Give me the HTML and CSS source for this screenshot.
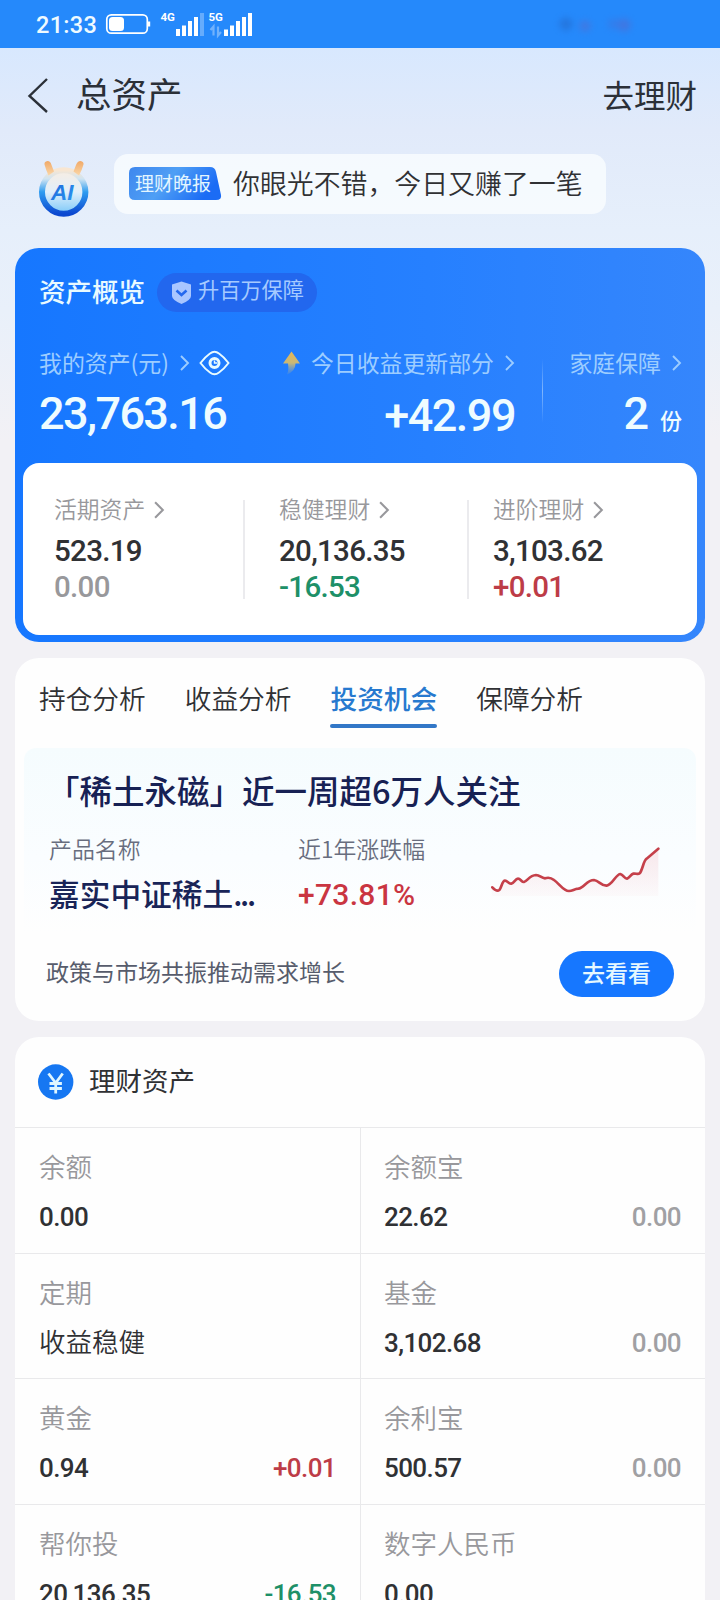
FILE: index.html
```html
<!DOCTYPE html>
<html lang="zh-CN">
<head>
<meta charset="utf-8">
<title>总资产</title>
<link rel="stylesheet" href="styles.css">
</head>
<body>
<svg width="0" height="0" class="defs">
  <symbol id="chev" viewBox="0 0 10 16"><path d="M1 1l7 7-7 7" fill="none" stroke="currentColor" stroke-width="1.9"/></symbol>
</svg>
<div class="status">
  <span class="time">21:33</span>
  <svg class="status-icons" width="160" height="48" viewBox="100 0 160 48">
    <rect x="106.8" y="14.8" width="40.5" height="18.4" rx="4.5" fill="none" stroke="#fff" stroke-width="1.7"/>
    <rect x="109" y="17" width="15" height="14" rx="3.5" fill="#fff"/>
    <path d="M149 21.5v5" stroke="#fff" stroke-width="2.4"/>
    <g fill="#fff">
      <text x="160.500" y="21" class="net">4G</text>
      <text x="208.500" y="21" class="net">5G</text>
      <path d="M176 29h4v7h-4zM182 25.500h4v10.500h-4zM188 21h4v15h-4zM194 17h4v19h-4z"/>
      <path d="M200 13h4v23h-4z" opacity=".3"/>
      <path d="M224 29.500h4v6.500h-4zM230 25.500h4v10.500h-4zM236 21h4v15h-4zM242 17h4v19h-4zM248 13h4v23h-4z"/>
    </g>
    <path d="M210.500 30l3-3.500v9M221 32l-3 3.500v-9" fill="none" stroke="#fff" stroke-width="2.200" opacity=".35"/>
  </svg>
  <span class="smudge"></span>
</div>
<header class="top">
  <svg width="22" height="36" viewBox="0 0 22 36"><path d="M20 2L2.500 19 20 35" fill="none" stroke="#2b3038" stroke-width="2.400"/></svg>
  <h1>总资产</h1>
  <span class="go">去理财</span>
</header>
<div class="report">
  <svg class="bot" width="54" height="58" viewBox="0 0 54 58">
    <defs>
      <linearGradient id="ring" x1="0" y1="0" x2="0" y2="1"><stop offset="0" stop-color="#f8e6d2"/><stop offset=".2" stop-color="#cfe4f2"/><stop offset=".5" stop-color="#2e9cf0"/><stop offset="1" stop-color="#0c48d0"/></linearGradient>
      <linearGradient id="face" x1="0" y1="0" x2="0" y2="1"><stop offset="0" stop-color="#f8ede2"/><stop offset=".5" stop-color="#e0effb"/><stop offset="1" stop-color="#7cc8f8"/></linearGradient>
      <linearGradient id="ai" x1="0" y1="0" x2="1" y2="1"><stop offset="0" stop-color="#1c63d8"/><stop offset="1" stop-color="#2d9bf2"/></linearGradient>
      <linearGradient id="ear" x1="0" y1="0" x2="0" y2="1"><stop offset="0" stop-color="#f0a968"/><stop offset="1" stop-color="#fbd7a8"/></linearGradient>
    </defs>
    <circle cx="26.700" cy="32" r="21.700" fill="url(#face)" stroke="url(#ring)" stroke-width="6"/>
    <path d="M7.500 4.500Q7 1.500 10.500 1Q13.500 1 14.500 5L17 11.500L11.500 15.500Q9 10 7.500 4.500zM46.500 4.500Q47 1.500 43.500 1Q40.500 1 39 5L36.500 11.500L42 15.500Q45 10 46.500 4.500z" fill="url(#ear)"/>
    <text x="14" y="40" class="ai" fill="url(#ai)">AI</text>
  </svg>
  <div class="bubble">
    <span class="tag">
      <svg class="tag-bg" width="93" height="34" viewBox="0 0 93 34"><defs><linearGradient id="tg" x1="0" y1="0" x2="1" y2=".3"><stop offset="0" stop-color="#3e87ee"/><stop offset=".5" stop-color="#4f9ff5"/><stop offset="1" stop-color="#1b6cf5"/></linearGradient></defs><path d="M6 0h75q5 0 6 5l5 23q1 5-5 5H6q-6 0-6-6V6q0-6 6-6z" fill="url(#tg)"/></svg>
      <span class="tag-text">理财晚报</span>
    </span>
    <span class="msg">你眼光不错，今日又赚了一笔</span>
  </div>
</div>
<section class="overview">
  <div class="ov-head">
    <h2>资产概览</h2>
    <span class="pill">
      <svg width="21" height="24" viewBox="0 0 21 24"><path d="M10.500 0.500L20 3.500V15q0 4-9.500 8Q1 19 1 15V3.500z" fill="#a9c6ff"/><path d="M5.500 9.500l5 4.500 5-4.500" fill="none" stroke="#2468ee" stroke-width="2.600"/></svg>
      <span>升百万保障</span>
    </span>
  </div>
  <div class="ov-main">
    <div class="ov-a">
      <div class="lab"><span>我的资产(元)</span><svg class="ch" width="10" height="16"><use href="#chev"/></svg>
        <svg class="eye" width="31" height="26" viewBox="0 0 31 26"><path d="M1.500 13Q6 7 11 3.500q4.500-3.500 9 0Q25 7 29.500 13 25 19 20 22.500q-4.500 3.500-9 0Q6 19 1.500 13z" fill="none" stroke="#e8fbff" stroke-width="2"/><circle cx="15.500" cy="13" r="4.500" fill="none" stroke="#e8fbff" stroke-width="3"/><path d="M15.500 10.500v2.500h2.500" fill="none" stroke="#e8fbff" stroke-width="1.400"/></svg>
      </div>
      <div class="big">23,763.16</div>
    </div>
    <div class="ov-b">
      <div class="lab"><svg class="up" width="19" height="24" viewBox="0 0 19 24"><defs><linearGradient id="ug" x1="0" y1="0" x2="0" y2="1"><stop offset="0" stop-color="#e5b658"/><stop offset=".5" stop-color="#c9b877"/><stop offset="1" stop-color="#7da0c0" stop-opacity=".2"/></linearGradient></defs><path d="M9.500 0.500L18 12.500H13.500Q13.500 20 5 23.500 7 19 6 12.500H1z" fill="url(#ug)"/></svg><span>今日收益更新部分</span><svg class="ch" width="10" height="16"><use href="#chev"/></svg></div>
      <div class="big gain">+42.99</div>
    </div>
    <i class="vline"></i>
    <div class="ov-c">
      <div class="lab"><span>家庭保障</span><svg class="ch" width="10" height="16"><use href="#chev"/></svg></div>
      <div class="big">2<small>份</small></div>
    </div>
  </div>
  <div class="split">
    <div class="sp s1"><div class="sl">活期资产<svg width="11" height="18"><use href="#chev"/></svg></div><b>523.19</b><b class="mute">0.00</b></div>
    <div class="sp s2"><div class="sl">稳健理财<svg width="11" height="18"><use href="#chev"/></svg></div><b>20,136.35</b><b class="green">-16.53</b></div>
    <div class="sp s3"><div class="sl">进阶理财<svg width="11" height="18"><use href="#chev"/></svg></div><b>3,103.62</b><b class="red">+0.01</b></div>
  </div>
</section>
<section class="card analysis">
  <nav class="tabs"><span>持仓分析</span><span>收益分析</span><span class="on">投资机会</span><span>保障分析</span></nav>
  <div class="panel">
    <h3><span class="quote">「</span>稀土永磁」近一周超6万人关注</h3>
    <div class="fund">
      <div class="f1"><div class="fl">产品名称</div><div class="fn">嘉实中证稀土<span class="dots">...</span></div></div>
      <div class="f2"><div class="fl">近1年涨跌幅</div><div class="fp">+73.81%</div></div>
      <svg class="spark" width="172" height="52" viewBox="393 587 516 156">
        <defs><linearGradient id="sg" x1="0" y1="0" x2="0" y2="1"><stop offset="0" stop-color="#e0364a" stop-opacity=".11"/><stop offset="1" stop-color="#e0364a" stop-opacity=".02"/></linearGradient></defs>
        <path d="M395 714Q410 728 418 722C425 715 426 694 435 694C442 694 447 704 454 703C462 702 466 688 474 688C482 688 485 699 492 698C502 696 508 678 528 677C540 677 544 687 555 687C563 684 572 684 582 692C598 703 610 725 627 725C638 725 642 719 655 718C672 716 680 692 702 692C717 694 724 710 740 709C758 706 768 674 781 674C790 676 794 689 801 688C808 686 812 675 820 673C828 671 833 677 839 672C848 662 850 634 860 628L895 598V740H395z" fill="url(#sg)"/>
        <path d="M397 714Q410 728 418 722C425 715 426 694 435 694C442 694 447 704 454 703C462 702 466 688 474 688C482 688 485 699 492 698C502 696 508 678 528 677C540 677 544 687 555 687C563 684 572 684 582 692C598 703 610 725 627 725C638 725 642 719 655 718C672 716 680 692 702 692C717 694 724 710 740 709C758 706 768 674 781 674C790 676 794 689 801 688C808 686 812 675 820 673C828 671 833 677 839 672C848 662 850 634 860 628L895 598" fill="none" stroke="#c5404a" stroke-width="8" stroke-linecap="round"/>
      </svg>
    </div>
    <div class="cta"><span>政策与市场共振推动需求增长</span><span class="btn">去看看</span></div>
  </div>
</section>
<section class="card assets">
  <div class="as-head">
    <svg width="36" height="36" viewBox="0 0 36 36"><circle cx="17.700" cy="18" r="17.700" fill="#1677f2"/><path d="M10.500 9.500L17.700 19l7-9.500M17.700 19v10.500M11.500 19.500h12.400M11.500 24.500h12.400" fill="none" stroke="#dff6ff" stroke-width="2.800"/></svg>
    <h2>理财资产</h2>
  </div>
  <div class="grid">
    <div class="cell"><div class="cl">余额</div><div class="cv"><b>0.00</b></div></div>
    <div class="cell"><div class="cl">余额宝</div><div class="cv"><b>22.62</b><em>0.00</em></div></div>
    <div class="cell"><div class="cl">定期</div><div class="cv"><span class="txt">收益稳健</span></div></div>
    <div class="cell"><div class="cl">基金</div><div class="cv"><b>3,102.68</b><em>0.00</em></div></div>
    <div class="cell"><div class="cl">黄金</div><div class="cv"><b>0.94</b><em class="red">+0.01</em></div></div>
    <div class="cell"><div class="cl">余利宝</div><div class="cv"><b>500.57</b><em>0.00</em></div></div>
    <div class="cell"><div class="cl">帮你投</div><div class="cv"><b>20,136.35</b><em class="green">-16.53</em></div></div>
    <div class="cell"><div class="cl">数字人民币</div><div class="cv"><b>0.00</b></div></div>
  </div>
</section>
</body>
</html>
```
FILE: styles.css
```css
* { box-sizing: border-box; }
html { background: #f2f1f5; }
body {
  margin: 0; width: 720px; height: 1600px; overflow: hidden;
  font-family: "Noto Sans CJK SC", sans-serif; color: #303134;
  background: linear-gradient(180deg, #d8e8fe 48px, #e1eafa 130px, #e6effb 230px, #e9f0fa 310px, #f2f1f5 440px);
}
h1, h2, h3 { margin: 0; font-weight: 400; }
svg { display: block; flex: none; }
.defs { position: absolute; }
span, div { white-space: nowrap; }

.status { height: 48px; background: #2589fb; display: flex; align-items: center; }
.time { font: 500 23.500px/48px Roboto, sans-serif; color: #effaff; width: 64px; margin: 2px 0 0 36px; letter-spacing: .3px; }
.net { font: 700 11.500px Roboto, sans-serif; }
.smudge { width: 88px; height: 16px; margin: 2px 0 0 287px; filter: blur(3px); opacity: .7;
  background: radial-gradient(circle at 19px 7px, #246fd4 5px, transparent 8px), radial-gradient(circle at 38px 9px, #4a72d8 4px, transparent 7px), radial-gradient(circle at 77px 8px, #4a70d8 5px, transparent 8px), radial-gradient(circle at 66px 7px, #3a78e4 3px, transparent 7px); }

.top { height: 94px; display: flex; align-items: center; padding: 0 23px 0 27px; color: #2b3038; }
.top h1 { font-size: 35.500px; line-height: 90px; margin: -4px 0 0 27px; }
.go { font-size: 31.500px; line-height: 92px; margin: -2px 0 0 auto; }

.report { height: 60px; margin-top: 12px; display: flex; padding-left: 37px; }
.bot { margin-top: 6px; }
.ai { font: italic 700 22.500px "Liberation Sans", sans-serif; }
.bubble { width: 492px; height: 60px; margin-left: 23px; border-radius: 14px; background: rgba(248, 251, 254, .86); display: flex; align-items: center; padding-left: 15px; }
.tag { display: grid; width: 93px; height: 34px; }
.tag > * { grid-area: 1 / 1; }
.tag-text { font-size: 19px; line-height: 32px; color: #e3f6ff; padding-left: 6px; }
.msg { font-size: 26.900px; font-weight: 350; line-height: 56px; margin: -2px 0 0 11px; }

.overview { margin: 34px 15px 0; height: 394px; border-radius: 24px; padding: 0 8px; background: linear-gradient(90deg, #1677ff, #2680ff 60%, #3586fc); }
.ov-head { height: 90px; padding: 25px 0 0 16px; display: flex; }
.ov-head h2 { font-size: 26.500px; font-weight: 500; line-height: 36px; color: #e9faff; }
.pill { margin-left: 12px; width: 160px; height: 39px; border-radius: 20px; background: #2267ee; display: flex; align-items: center; padding-left: 14px; color: #a5caff; }
.pill span { font-size: 21.200px; line-height: 34px; margin: -8px 0 0 6px; }
.ov-main { display: flex; height: 125px; padding: 7px 15px 0 16px; }
.lab { display: flex; align-items: center; height: 36px; font-size: 22.900px; color: #9dcdff; }
.lab span { line-height: 34px; margin-top: -2px; }
.lab .ch { margin-left: 11px; }
.lab .eye { margin-left: 9px; }
.lab .up { margin-right: 10px; }
.ov-a { width: 245px; }
.ov-b { width: 231px; }
.ov-c { margin-left: auto; }
.ov-b .lab, .ov-c .lab { justify-content: flex-end; }
.big { font: 500 45px/66px Roboto, sans-serif; height: 66px; letter-spacing: -1.600px; color: #effcff; }
.big.gain { text-align: right; padding-top: 2px; letter-spacing: -1.500px; }
.ov-c .big { text-align: right; letter-spacing: 0; }
.big small { font: 500 22px/30px "Noto Sans CJK SC", sans-serif; margin-left: 11px; }
.vline { width: 1px; height: 64px; margin: 14px 0 0 27px; background: linear-gradient(transparent, #81b6fc 50%, transparent); }

.split { height: 172px; border-radius: 16px; background: #fff; display: flex; padding-top: 29px; }
.sp { display: flex; flex-direction: column; height: 100px; }
.sp + .sp { border-left: 2px solid #ebebee; margin-top: 8px; height: 99px; }
.sp + .sp .sl { margin-top: -8px; }
.s1 { width: 220px; padding-left: 31px; }
.s2 { width: 224px; padding-left: 34px; }
.s3 { padding-left: 24px; }
.sl { display: flex; align-items: center; font-size: 22.800px; font-weight: 350; line-height: 34px; height: 36px; color: #98989c; }
.sl svg { margin: 2px 0 0 9px; }
.sp b { font: 500 29.500px/36px Roboto, sans-serif; letter-spacing: -.7px; height: 36px; margin-top: 7px; }
.sp b + b { margin-top: 0; }
.mute { color: #98989b; }
.green { color: #1e9068; }
.red { color: #bd3c47; }

.card { margin: 16px 15px 0; background: #fefefe; border-radius: 24px; }
.analysis { height: 363px; padding: 0 9px; }
.tabs { display: flex; gap: 39px; height: 90px; padding-left: 15px; font-size: 26.700px; font-weight: 350; }
.tabs span { line-height: 36px; height: 66px; padding-top: 22px; }
.tabs .on { color: #2779cf; font-weight: 500; }
.tabs .on::after { content: ""; display: block; height: 4px; margin: 8px 0 0 -1px; border-radius: 2px; background: #3277c7; }
.panel { border-radius: 12px; height: 262px; background: linear-gradient(#f5fcfe, #fafdff 110px, #fefefe 185px); }
.panel h3 { font-size: 32.500px; font-weight: 500; line-height: 44px; padding: 20px 0 0 23px; color: #172154; }
.fund { display: flex; padding: 16px 0 0 25px; height: 106px; }
.f1 { width: 249px; }
.f2 { width: 193px; }
.fl { font-size: 22.900px; font-weight: 350; line-height: 40px; color: #686d7e; }
.fn { font-size: 30.700px; font-weight: 500; line-height: 50px; color: #192457; }
.dots { letter-spacing: -2.200px; }
.fp { font: 500 30px/50px Roboto, sans-serif; color: #ca3541; letter-spacing: .3px; padding-top: 2px; }
.spark { margin-top: 17px; }
.cta { display: flex; align-items: center; justify-content: space-between; height: 46px; margin: 33px 22px 0 22px; font-size: 23px; color: #575c6c; }
.cta span { line-height: 42px; margin-top: -6px; }
.cta .btn { width: 115px; height: 46px; margin-top: 0; border-radius: 23px; background: #1677ff; color: #e6f8ff; font-weight: 500; text-align: center; }

.assets { height: 640px; }
.as-head { height: 90px; display: flex; align-items: center; padding-left: 23px; }
.as-head h2 { font-size: 26.500px; line-height: 80px; margin: -5px 0 0 15px; }
.grid { display: grid; grid-template-columns: 345px 345px; grid-auto-rows: 125.670px; }
.cell { border-top: 1px solid #e9e9eb; padding: 15px 24px 0; }
.cell:nth-child(even) { border-left: 1px solid #e9e9eb; padding-left: 23px; }
.cl { font-size: 26.500px; font-weight: 350; line-height: 46px; height: 49px; color: #98989c; }
.cv { display: flex; justify-content: space-between; line-height: 50px; }
.cv b, .cv em { font: 500 26px/50px Roboto, sans-serif; letter-spacing: -.6px; }
.cv em:not(.red):not(.green) { color: #a0a0a3; }
.cv .txt { font-size: 26.500px; line-height: 46px; font-weight: 350; }
```
